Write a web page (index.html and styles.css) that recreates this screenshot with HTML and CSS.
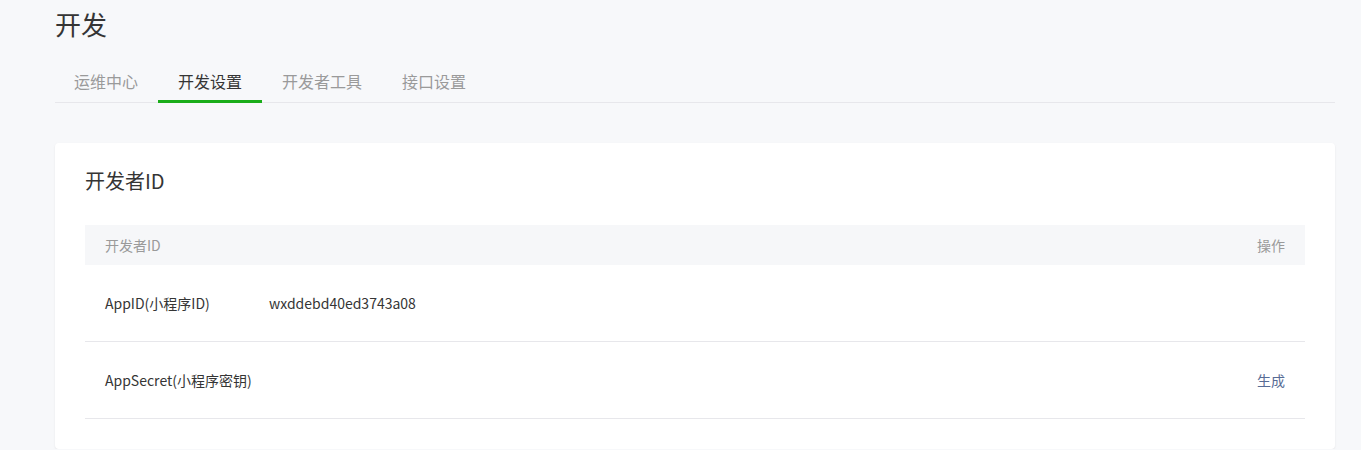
FILE: index.html
```html
<!DOCTYPE html>
<html lang="zh-CN">
<head>
<meta charset="utf-8">
<link rel="stylesheet" href="styles.css">
</head>
<body>
<div class="page">
  <h1 class="page-title">开发</h1>
  <nav class="tabs">
    <a class="tab">运维中心</a>
    <a class="tab active">开发设置</a>
    <a class="tab">开发者工具</a>
    <a class="tab">接口设置</a>
  </nav>
  <section class="card">
    <h2 class="card-title">开发者ID</h2>
    <div class="table">
      <div class="thead">
        <span>开发者ID</span>
        <span>操作</span>
      </div>
      <div class="row">
        <span class="label">AppID(小程序ID)</span>
        <span class="value">wxddebd40ed3743a08</span>
        <span class="action"></span>
      </div>
      <div class="row">
        <span class="label">AppSecret(小程序密钥)</span>
        <span class="value"></span>
        <a class="action link">生成</a>
      </div>
    </div>
  </section>
</div>
</body>
</html>
```
FILE: styles.css
```css
* { box-sizing: border-box; }
html, body { margin: 0; padding: 0; }
body {
  background: #f7f8fa;
  font-family: "Noto Sans CJK SC", "Noto Sans", sans-serif;
  color: #353535;
}
.page {
  width: 1280px;
  margin-left: 55px;
}
.page-title {
  margin: 0;
  padding-top: 6px;
  font-size: 26px;
  font-weight: 400;
  line-height: 36px;
  color: #353535;
}
.tabs {
  display: flex;
  margin-top: 20px;
  border-bottom: 1px solid #e7e7eb;
  height: 41px;
}
.tab {
  display: block;
  padding: 0 20px;
  font-size: 16px;
  line-height: 38px;
  height: 41px;
  color: #9a9a9a;
  border-bottom: 3px solid transparent;
  margin-bottom: -1px;
}
.tab:first-child { margin-left: -1px; }
.tab.active {
  color: #353535;
  border-bottom-color: #1aad19;
}
.card {
  margin-top: 40px;
  background: #fff;
  border-radius: 4px;
  box-shadow: 0 1px 2px rgba(150,150,150,0.18);
  padding: 22px 30px 30px;
}
.card-title {
  margin: 0;
  font-size: 20px;
  font-weight: 400;
  line-height: 32px;
  color: #353535;
}
.table { margin-top: 28px; }
.thead {
  display: flex;
  justify-content: space-between;
  background: #f6f7f9;
  height: 40px;
  align-items: center;
  padding: 0 20px;
  font-size: 14px;
  color: #9a9a9a;
}
.row {
  display: flex;
  align-items: center;
  height: 77px;
  border-bottom: 1px solid #e7e7eb;
  padding: 0 20px;
  font-size: 14px;
  color: #353535;
}
.label { width: 164px; }
.value { flex: 1; }
.link { color: #576b95; }
```
